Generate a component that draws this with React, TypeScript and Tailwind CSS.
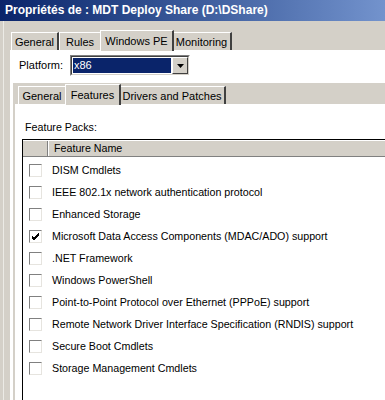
import React from "react";

const features: { name: string; checked?: boolean }[] = [
  { name: "DISM Cmdlets" },
  { name: "IEEE 802.1x network authentication protocol" },
  { name: "Enhanced Storage" },
  { name: "Microsoft Data Access Components (MDAC/ADO) support", checked: true },
  { name: ".NET Framework" },
  { name: "Windows PowerShell" },
  { name: "Point-to-Point Protocol over Ethernet (PPPoE) support" },
  { name: "Remote Network Driver Interface Specification (RNDIS) support" },
  { name: "Secure Boot Cmdlets" },
  { name: "Storage Management Cmdlets" },
];

// onglet classique Windows
function Tab({
  label,
  width,
  selected,
}: {
  label: string;
  width: number;
  selected?: boolean;
}) {
  return (
    <div
      className={
        selected
          ? "relative z-10 -mx-[2px] h-[21px] border-l border-t border-white border-r-2 border-r-[#404040] bg-[#d4d0c8] -mb-[1px] pt-[2px] text-center"
          : "h-[18px] border-l border-t border-white border-r-2 border-r-[#404040] bg-[#d4d0c8] pt-[1px] text-center"
      }
      style={{ width: selected ? width + 4 : width }}
    >
      {label}
    </div>
  );
}

function Checkbox({ checked }: { checked?: boolean }) {
  return (
    <div className="w-[13px] h-[13px] shrink-0 border border-t-[#808080] border-l-[#808080] border-r-[#e6e4df] border-b-[#e6e4df] bg-white flex items-center justify-center">
      {checked && (
        <svg width="9" height="9" viewBox="0 0 9 9">
          <path d="M1 4 L3 6 L8 1 M1 5 L3 7 L8 2 M1 6 L3 8 L8 3" stroke="#000" strokeWidth="1" fill="none" />
        </svg>
      )}
    </div>
  );
}

export default function App() {
  return (
    <div className="w-[385px] h-[400px] overflow-hidden bg-[#d4d0c8] font-['Liberation_Sans',Arial,sans-serif] text-[11px] text-black flex flex-col">
      {/* barre de titre */}
      <div className="h-[21px] shrink-0 bg-gradient-to-r from-[#0a246a] to-[#7393cd] pl-[5px] text-[12px] font-bold text-white leading-[20px] whitespace-nowrap">
        Propriétés de : MDT Deploy Share (D:\DShare)
      </div>

      <div className="flex flex-1 min-h-0">
        {/* bord gauche de la fenêtre */}
        <div className="w-[3px] shrink-0" />
        <div className="w-[1px] shrink-0 bg-[#ecebe6]" />
        <div className="w-[6px] shrink-0" />

        <div className="flex-1 min-w-0 flex flex-col pt-[7px]">
          {/* onglets principaux */}
          <div className="flex items-end h-[22px] pl-[1px] shrink-0">
            <Tab label="General" width={48} />
            <Tab label="Rules" width={43} />
            <Tab label="Windows PE" width={70} selected />
            <Tab label="Monitoring" width={60} />
          </div>

          {/* page Windows PE */}
          <div className="flex-1 min-h-0 bg-white border-l border-t border-white flex flex-col">
            <div className="flex items-center h-[21px] mt-[4px] pl-[8px] shrink-0">
              <span className="w-[51px]">Platform:</span>
              <div className="w-[120px] h-[21px] flex border border-t-[#808080] border-l-[#808080] border-r-white border-b-white">
                <div className="flex-1 flex border border-t-[#404040] border-l-[#404040] border-r-[#d4d0c8] border-b-[#d4d0c8] bg-white">
                  <div className="flex-1 m-[1px] bg-[#0a246a] text-white leading-[15px] pl-[1px]">x86</div>
                  <div className="w-[16px] bg-[#d4d0c8] border border-t-white border-l-white border-r-[#404040] border-b-[#404040] flex items-center justify-center">
                    <svg width="7" height="4" viewBox="0 0 7 4">
                      <path d="M0 0 H7 L3.5 4 Z" fill="#000" />
                    </svg>
                  </div>
                </div>
              </div>
            </div>

            {/* contrôle d'onglets interne */}
            <div className="flex-1 min-h-0 mt-[7px] ml-[2px] bg-[#d4d0c8] flex flex-col">
              <div className="flex items-end h-[21px] pl-[5px] shrink-0">
                <Tab label="General" width={49} />
                <Tab label="Features" width={52} selected />
                <Tab label="Drivers and Patches" width={107} />
              </div>

              <div className="flex-1 min-h-0 ml-[2px] bg-white border-l border-t border-white flex flex-col">
                <div className="pl-[9px] pt-[14px] h-[34px] shrink-0 text-[10.7px]">Feature Packs:</div>

                {/* liste */}
                <div className="flex-1 min-h-0 ml-[6px] border-l border-t border-black flex flex-col text-[10.7px]">
                  <div className="flex h-[17px] shrink-0 bg-[#d4d0c8] border-t border-t-white border-b border-b-[#808080]">
                    <div className="w-[25px] border-r border-r-[#808080]" />
                    <div className="w-[1px] bg-white" />
                    <div className="pl-[5px] leading-[15px]">Feature Name</div>
                  </div>
                  <div className="pt-[2px] flex flex-col">
                    {features.map((f) => (
                      <div key={f.name} className="flex items-center h-[22px] pl-[6px] whitespace-nowrap">
                        <Checkbox checked={f.checked} />
                        <span className="ml-[10px]">{f.name}</span>
                      </div>
                    ))}
                  </div>
                </div>
              </div>
            </div>
          </div>
        </div>
      </div>
    </div>
  );
}
